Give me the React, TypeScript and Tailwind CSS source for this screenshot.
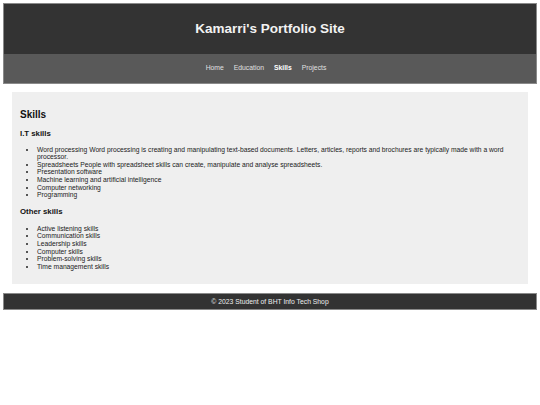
import React from "react";

const itSkills = [
  "Word processing Word processing is creating and manipulating text-based documents. Letters, articles, reports and brochures are typically made with a word processor.",
  "Spreadsheets People with spreadsheet skills can create, manipulate and analyse spreadsheets.",
  "Presentation software",
  "Machine learning and artificial intelligence",
  "Computer networking",
  "Programming",
];

const otherSkills = [
  "Active listening skills",
  "Communication skills",
  "Leadership skills",
  "Computer skills",
  "Problem-solving skills",
  "Time management skills",
];

const navItems = ["Home", "Education", "Skills", "Projects"];

function SkillList({ items }: { items: string[] }) {
  return (
    <ul className="list-disc pl-[17px] text-[6.72px] leading-[7.6px] text-[#222]">
      {items.map((s) => (
        <li key={s}>{s}</li>
      ))}
    </ul>
  );
}

export default function App() {
  return (
    <div className="min-h-[405px] bg-white p-[3px] font-['Liberation_Sans',Arial,sans-serif]">
      <header className="border border-[#8a8a8a]">
        <div className="flex h-[50px] items-center justify-center bg-[#333333]">
          <h1 className="text-[13.5px] font-bold text-[#f2f2f2]">Kamarri's Portfolio Site</h1>
        </div>
        <nav className="flex h-[29px] items-center justify-center gap-[10px] bg-[#595959] pr-[8px] text-[6.8px]">
          {navItems.map((n) => (
            <span key={n} className={n === "Skills" ? "font-bold text-white" : "text-[#e0e0e0]"}>
              {n}
            </span>
          ))}
        </nav>
      </header>

      <main className="mx-[9px] mt-[8px] bg-[#efefef] px-[8px] pt-[17px] pb-[14px]">
        <h2 className="text-[10px] font-bold leading-[11.5px] text-[#111]">Skills</h2>
        <h3 className="mt-[8.5px] text-[7.8px] font-bold leading-[9px] text-[#111]">I.T skills</h3>
        <div className="mt-[7.7px]">
          <SkillList items={itSkills} />
        </div>
        <h3 className="mt-[7.7px] text-[7.8px] font-bold leading-[9px] text-[#111]">Other skills</h3>
        <div className="mt-[9.2px]">
          <SkillList items={otherSkills} />
        </div>
      </main>

      <footer className="mt-[9px] flex h-[17px] items-center justify-center border border-[#8a8a8a] bg-[#333333] text-[6.8px] text-[#ededed]">
        © 2023 Student of BHT Info Tech Shop
      </footer>
    </div>
  );
}
